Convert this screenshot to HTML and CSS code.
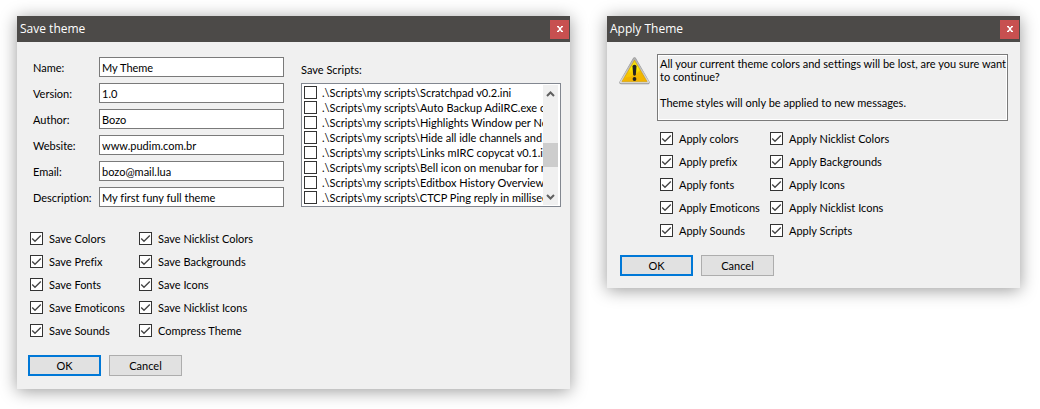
FILE: index.html
```html
<!DOCTYPE html>
<html lang="en">
<head>
<meta charset="utf-8">
<title>Theme dialogs</title>
<link rel="stylesheet" href="styles.css">
</head>
<body>
<main class="desktop">
  <section class="window window-save" aria-labelledby="save-title">
    <header class="titlebar">
      <h1 id="save-title">Save theme</h1>
      <button class="close" type="button" aria-label="Close"><svg width="6" height="6" viewBox="0 0 6 6"><path d="M0 .5H2M4 .5H6M0 5.5H2M4 5.5H6M1.2.5L4.8 5.5M4.8.5L1.2 5.5" stroke="#fff" stroke-width="1.3"/></svg></button>
    </header>
    <form class="save-body">
      <div class="columns">
        <div class="fields">
          <label for="f-name">Name:</label><input id="f-name" type="text" value="My Theme">
          <label for="f-version">Version:</label><input id="f-version" type="text" value="1.0">
          <label for="f-author">Author:</label><input id="f-author" type="text" value="Bozo">
          <label for="f-site">Website:</label><input id="f-site" type="text" value="www.pudim.com.br">
          <label for="f-email">Email:</label><input id="f-email" type="text" value="bozo@mail.lua">
          <label for="f-desc">Description:</label><input id="f-desc" type="text" value="My first funy full theme">
        </div>
        <div class="scripts">
          <div class="scripts-title" id="scripts-title">Save Scripts:</div>
          <div class="listbox" role="group" aria-labelledby="scripts-title">
            <div class="rows">
              <label><input type="checkbox">.\Scripts\my scripts\Scratchpad v0.2.ini</label>
              <label><input type="checkbox">.\Scripts\my scripts\Auto Backup AdiIRC.exe on</label>
              <label><input type="checkbox">.\Scripts\my scripts\Highlights Window per Net</label>
              <label><input type="checkbox">.\Scripts\my scripts\Hide all idle channels and c</label>
              <label><input type="checkbox">.\Scripts\my scripts\Links mIRC copycat v0.1.ini</label>
              <label><input type="checkbox">.\Scripts\my scripts\Bell icon on menubar for ne</label>
              <label><input type="checkbox">.\Scripts\my scripts\Editbox History Overview v</label>
              <label><input type="checkbox">.\Scripts\my scripts\CTCP Ping reply in millisec</label>
            </div>
            <div class="scrollbar">
              <svg width="15" height="17" viewBox="0 0 15 17"><path d="M4 11L7.5 7.5L11 11" fill="none" stroke="#606060" stroke-width="2"/></svg>
              <div class="track"><div class="thumb"></div></div>
              <svg width="15" height="17" viewBox="0 0 15 17"><path d="M4 7L7.5 10.500L11 7" fill="none" stroke="#606060" stroke-width="2"/></svg>
            </div>
          </div>
        </div>
      </div>
      <div class="checks">
        <label><input type="checkbox" checked>Save Colors</label>
        <label><input type="checkbox" checked>Save Nicklist Colors</label>
        <label><input type="checkbox" checked>Save Prefix</label>
        <label><input type="checkbox" checked>Save Backgrounds</label>
        <label><input type="checkbox" checked>Save Fonts</label>
        <label><input type="checkbox" checked>Save Icons</label>
        <label><input type="checkbox" checked>Save Emoticons</label>
        <label><input type="checkbox" checked>Save Nicklist Icons</label>
        <label><input type="checkbox" checked>Save Sounds</label>
        <label><input type="checkbox" checked>Compress Theme</label>
      </div>
      <div class="buttons">
        <button class="btn btn-default" type="button">OK</button>
        <button class="btn" type="button">Cancel</button>
      </div>
    </form>
  </section>

  <section class="window window-apply" aria-labelledby="apply-title">
    <header class="titlebar">
      <h1 id="apply-title">Apply Theme</h1>
      <button class="close" type="button" aria-label="Close"><svg width="6" height="6" viewBox="0 0 6 6"><path d="M0 .5H2M4 .5H6M0 5.5H2M4 5.5H6M1.2.5L4.8 5.5M4.8.5L1.2 5.5" stroke="#fff" stroke-width="1.3"/></svg></button>
    </header>
    <form class="apply-body">
      <div class="notice">
        <svg class="warning" width="32" height="30" viewBox="0 0 32 30">
          <defs>
            <linearGradient id="gold" x1="0" y1="0" x2="0" y2="1"><stop offset="0" stop-color="#e8d020"/><stop offset=".35" stop-color="#fff200"/><stop offset=".6" stop-color="#f5c800"/><stop offset="1" stop-color="#fcc000"/></linearGradient>
            <linearGradient id="rim" x1="0" y1="0" x2="0" y2="1"><stop offset="0" stop-color="#b0b0b0"/><stop offset="1" stop-color="#d8d8d8"/></linearGradient>
          </defs>
          <path d="M15.500 3L29 26.500H2Z" fill="#989898" stroke="#989898" stroke-width="3.500" stroke-linejoin="round"/>
          <path d="M15.500 3L29 26H2Z" fill="url(#rim)" stroke="url(#rim)" stroke-width="2.400" stroke-linejoin="round"/>
          <path d="M15.500 4.200L28 25.600H3Z" fill="url(#gold)" stroke="#d8a410" stroke-width=".8" stroke-linejoin="round"/>
          <path d="M6.500 21.500Q16.500 20.500 21 14L27.500 25H4.500Z" fill="#e59c00" opacity=".35"/>
          <path d="M13.500 10.500Q13.500 8.800 15.500 8.800T17.500 10.500L16.800 19Q15.500 20.500 14.200 19Z" fill="#222"/>
          <circle cx="15.500" cy="23" r="1.900" fill="#222"/>
        </svg>
        <textarea class="message" readonly rows="4" aria-label="Warning">All your current theme colors and settings will be lost, are you sure want
to continue?

Theme styles will only be applied to new messages.</textarea>
      </div>
      <div class="checks">
        <label><input type="checkbox" checked>Apply colors</label>
        <label><input type="checkbox" checked>Apply Nicklist Colors</label>
        <label><input type="checkbox" checked>Apply prefix</label>
        <label><input type="checkbox" checked>Apply Backgrounds</label>
        <label><input type="checkbox" checked>Apply fonts</label>
        <label><input type="checkbox" checked>Apply Icons</label>
        <label><input type="checkbox" checked>Apply Emoticons</label>
        <label><input type="checkbox" checked>Apply Nicklist Icons</label>
        <label><input type="checkbox" checked>Apply Sounds</label>
        <label><input type="checkbox" checked>Apply Scripts</label>
      </div>
      <div class="buttons">
        <button class="btn btn-default" type="button">OK</button>
        <button class="btn" type="button">Cancel</button>
      </div>
    </form>
  </section>
</main>
</body>
</html>
```
FILE: styles.css
```css
* { box-sizing: border-box; }
body {
  margin: 0;
  background: #fff;
  color: #000;
  font: 11px/13px Lato, "Liberation Sans", Arial, sans-serif;
  font-variant-ligatures: none;
}
input, button, textarea { font: inherit; font-variant-ligatures: none; color: inherit; margin: 0; }
.desktop {
  display: flex;
  align-items: flex-start;
  gap: 37px;
  padding: 16px 20px 20px 17px;
}
.window {
  min-width: 0;
  background: #f0f0f0;
  box-shadow: 0 2px 16px rgba(0, 0, 0, .4);
}
.window-save { flex: 553 1 0; }
.window-apply { flex: 413 1 0; }
.titlebar {
  display: flex;
  justify-content: space-between;
  align-items: center;
  height: 26px;
  padding: 0 1px 0 3px;
  background: #4c4a48;
  color: #fff;
}
.titlebar h1 {
  margin: 0;
  font: 400 12px/16px "Open Sans", "Noto Sans", sans-serif;
}
.close {
  display: flex;
  align-items: center;
  justify-content: center;
  width: 19px;
  height: 19px;
  padding: 0;
  border: 0;
  background: #c75050;
}
.save-body { padding: 15px 9px 13px 11px; }
.columns { display: flex; gap: 17px; }
.fields {
  display: grid;
  grid-template-columns: 66px 185px;
  align-items: center;
  align-content: start;
  row-gap: 6px;
  padding-left: 5px;
}
.fields input {
  width: 100%;
  height: 20px;
  padding: 0 2px;
  border: 1px solid #7a7a7a;
  background: #fff;
}
.scripts { flex: 1; min-width: 0; }
.scripts-title { padding: 6px 0 7px; }
.listbox {
  display: flex;
  padding: 1px;
  border: 1px solid #828790;
  background: #fff;
}
.rows { flex: 1; min-width: 0; overflow: hidden; padding-left: 1px; }
.rows label {
  display: flex;
  align-items: center;
  gap: 5px;
  height: 15px;
  white-space: nowrap;
}
.scrollbar {
  display: flex;
  flex-direction: column;
  margin-right: 1px;
  background: #f0f0f0;
}
.track { flex: 1; padding-top: 41px; }
.thumb { height: 24px; background: #cdcdcd; }
input[type="checkbox"] {
  appearance: none;
  flex: none;
  width: 13px;
  height: 13px;
  border: 1px solid #333;
  background: #fff;
}
input[type="checkbox"]:checked {
  background: #fff url("data:image/svg+xml,%3Csvg xmlns='http://www.w3.org/2000/svg' viewBox='0 0 11 11'%3E%3Cpath d='M1.200 5.500L4 8.300L9.800 2.500' fill='none' stroke='%23444' stroke-width='1.300'/%3E%3C/svg%3E") center / 11px 11px no-repeat;
}
.checks {
  display: grid;
  grid-template-columns: 109px 1fr;
  row-gap: 10px;
}
.checks label { display: flex; align-items: center; gap: 6px; white-space: nowrap; }
.save-body .checks { padding: 25px 0 18px 2px; }
.buttons { display: flex; gap: 8px; }
.btn {
  width: 73px;
  height: 21px;
  padding: 0;
  border: 1px solid #adadad;
  background: #e1e1e1;
}
.btn-default { border: 2px solid #0078d7; }
.apply-body { padding: 12px; }
.notice { display: flex; gap: 6px; }
.warning { flex: none; margin-top: 2px; }
.message {
  flex: 1;
  min-width: 0;
  height: 67px;
  padding: 2px;
  border: 1px solid #7a7a7a;
  box-shadow: inset 0 0 0 1px #fff;
  background: #f0f0f0;
  resize: none;
  overflow: hidden;
  white-space: pre;
}
.apply-body .checks {
  grid-template-columns: 110px 1fr;
  padding: 11px 0 18px 41px;
}
.apply-body .buttons { padding-left: 1px; }
```
